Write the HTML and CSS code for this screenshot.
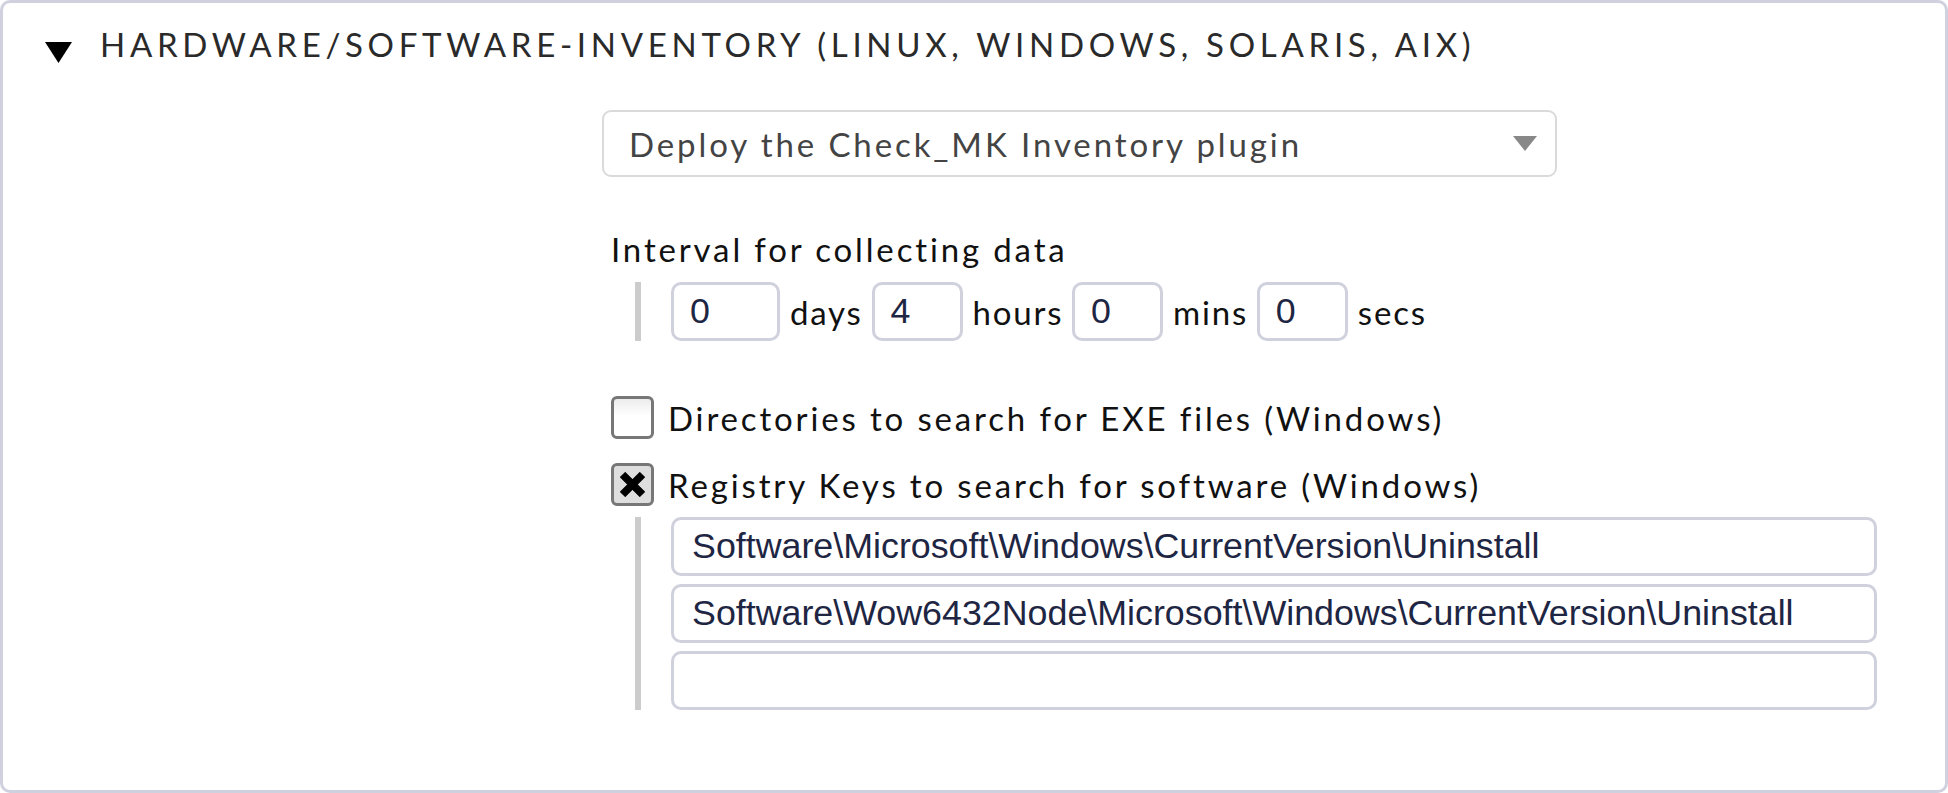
FILE: index.html
```html
<!DOCTYPE html>
<html>
<head>
<meta charset="utf-8">
<link rel="stylesheet" href="styles.css">
</head>
<body>
<div class="box">
  <div class="header">
    <svg class="tri" width="27" height="21" viewBox="0 0 27 21"><polygon points="0,0 27,0 13.5,21" fill="#000"/></svg>
    <span class="title">HARDWARE/SOFTWARE-INVENTORY (LINUX, WINDOWS, SOLARIS, AIX)</span>
  </div>
  <div class="content">
    <div class="select">
      <span>Deploy the Check_MK Inventory plugin</span>
      <svg class="arrow" width="24" height="15" viewBox="0 0 24 15"><polygon points="0,0 24,0 12,15" fill="#888"/></svg>
    </div>
    <div class="params">
      <div class="label">Interval for collecting data</div>
      <div class="indent interval">
        <input class="num wide" type="text" value="0">
        <span class="unit">days</span>
        <input class="num" type="text" value="4">
        <span class="unit">hours</span>
        <input class="num" type="text" value="0">
        <span class="unit">mins</span>
        <input class="num" type="text" value="0">
        <span class="unit">secs</span>
      </div>
      <div class="cbrow first">
        <span class="cb"></span>
        <span class="cblabel">Directories to search for EXE files (Windows)</span>
      </div>
      <div class="cbrow second">
        <span class="cb checked"><svg width="25" height="25" viewBox="0 0 24 24"><path d="M0.5 5 L5 0.5 L12 7.5 L19 0.5 L23.5 5 L16.5 12 L23.5 19 L19 23.5 L12 16.5 L5 23.5 L0.5 19 L7.5 12 Z" fill="#000" stroke="#000" stroke-width="1" stroke-linejoin="round"/></svg></span>
        <span class="cblabel">Registry Keys to search for software (Windows)</span>
      </div>
      <div class="indent list">
        <input class="text" type="text" value="Software\Microsoft\Windows\CurrentVersion\Uninstall">
        <input class="text" type="text" value="Software\Wow6432Node\Microsoft\Windows\CurrentVersion\Uninstall">
        <input class="text" type="text" value="">
      </div>
    </div>
  </div>
</div>
</body>
</html>
```

FILE: styles.css
```css
html, body {
  margin: 0;
  padding: 0;
  background: #fff;
}
body {
  font-family: Lato, "Liberation Sans", sans-serif;
  color: #111;
}
.box {
  width: 1948px;
  height: 793px;
  box-sizing: border-box;
  border: 3px solid #d0d1df;
  border-radius: 10px;
  background: #fff;
}
.header {
  display: flex;
  align-items: flex-start;
  padding: 21px 0 0 42px;
  height: 40px;
}
.tri {
  margin-top: 18px;
  flex: none;
}
.title {
  margin-left: 28px;
  font-size: 33px;
  line-height: 40px;
  letter-spacing: 4.7px;
  color: #2a2a2a;
  white-space: nowrap;
}
.content {
  margin: 46px 0 0 599px;
}
.select {
  width: 955px;
  height: 67px;
  box-sizing: border-box;
  border: 2px solid #dadada;
  border-radius: 9px;
  padding: 0 18px 0 25px;
  display: flex;
  align-items: center;
  justify-content: space-between;
  font-size: 33px;
  color: #444;
  letter-spacing: 2.9px;
}
.params {
  padding-left: 9px;
}
.label {
  margin-top: 52px;
  font-size: 33px;
  line-height: 40px;
  letter-spacing: 2.85px;
}
.indent {
  margin-left: 24px;
  border-left: 6px solid #cccccc;
  padding-left: 30px;
}
.interval {
  margin-top: 13px;
  display: flex;
  align-items: center;
  gap: 10px;
}
input {
  margin: 0;
  box-sizing: border-box;
  border: 3px solid #cfd1dd;
  border-radius: 10px;
  background: #fff;
  font-family: "Liberation Sans", Arial, sans-serif;
  font-size: 35.8px;
  color: #1e2643;
  outline: none;
}
.num {
  width: 91px;
  height: 59px;
  padding: 0 0 0 16px;
}
.num.wide {
  width: 109px;
}
.unit {
  font-size: 33px;
  line-height: 40px;
  letter-spacing: 1.8px;
  margin-right: -1.2px;
}
.cbrow {
  display: flex;
  align-items: center;
  gap: 14px;
  height: 43px;
}
.cbrow.first {
  margin-top: 55px;
}
.cbrow.second {
  margin-top: 24px;
}
.cb {
  width: 43px;
  height: 43px;
  box-sizing: border-box;
  border: 3px solid #777;
  border-radius: 6px;
  background: linear-gradient(#ececec, #ffffff 45%);
  display: flex;
  align-items: center;
  justify-content: center;
  flex: none;
}
.cb.checked {
  background: #dedede;
}
.cblabel {
  font-size: 33px;
  line-height: 40px;
  letter-spacing: 2.85px;
}
.list {
  margin-top: 11px;
  display: flex;
  flex-direction: column;
  gap: 8px;
}
.text {
  width: 1206px;
  height: 59px;
  padding: 0 0 0 18px;
}
```
